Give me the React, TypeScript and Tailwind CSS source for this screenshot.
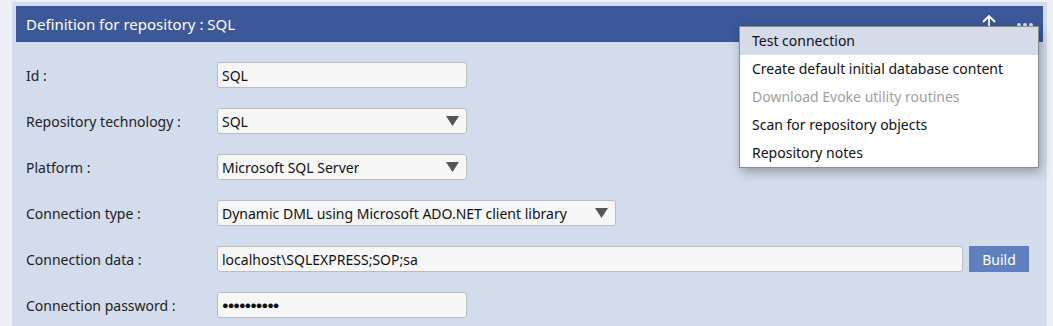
import React from "react";

const font = { fontFamily: '"Noto Sans", "Open Sans", sans-serif' };

function Arrow() {
  return (
    <svg width="13" height="10" viewBox="0 0 13 10" className="shrink-0">
      <polygon points="0,0 13,0 6.5,10" fill="#555555" />
    </svg>
  );
}

function Row({ label, children }: { label: string; children: React.ReactNode }) {
  return (
    <div className="flex items-center h-[26px]">
      <div className="w-[201px] pl-[10px] text-[14px] text-[#222]">{label}</div>
      <div className="flex items-center gap-[6px]">{children}</div>
    </div>
  );
}

function Box({ w, value, select }: { w: string; value: string; select?: boolean }) {
  return (
    <div
      className={`${w} h-[26px] bg-[#f7f7f7] border border-[#bcbcbc] rounded-[3px] flex items-center justify-between pl-[4px] pr-[7px] text-[14px] text-[#111]`}
    >
      <span className="truncate">{value}</span>
      {select && <Arrow />}
    </div>
  );
}

export default function App() {
  return (
    <div className="relative w-[1053px] h-[326px] bg-[#eff0f6] pl-3 pr-[6px] pt-[2px] overflow-hidden" style={font}>
      <div className="bg-[#d3dcec] h-full pl-1 pr-1 pt-1">
        <div className="h-[36px] bg-[#3c5898] flex items-center justify-between pl-[10px] pr-[10px] text-white">
          <span className="text-[15px]">Definition for repository : SQL</span>
          <div className="flex items-start self-stretch gap-[21px]">
            <svg width="14" height="22" viewBox="0 0 14 22" fill="none" stroke="white" strokeWidth="1.8" className="mt-[8px]">
              <path d="M7 22 V2 M1 8 L7 2 L13 8" />
            </svg>
            <div className="flex gap-[2px] mt-[17px]">
              <span className="w-[4px] h-[4px] bg-white/80 rounded-full" />
              <span className="w-[4px] h-[4px] bg-white/80 rounded-full" />
              <span className="w-[4px] h-[4px] bg-white/80 rounded-full" />
            </div>
          </div>
        </div>
        <div className="flex flex-col gap-[20px] pt-[20px]">
          <Row label="Id :">
            <Box w="w-[250px]" value="SQL" />
          </Row>
          <Row label="Repository technology :">
            <Box w="w-[250px]" value="SQL" select />
          </Row>
          <Row label="Platform :">
            <Box w="w-[250px]" value="Microsoft SQL Server" select />
          </Row>
          <Row label="Connection type :">
            <Box w="w-[399px]" value="Dynamic DML using Microsoft ADO.NET client library" select />
          </Row>
          <Row label="Connection data :">
            <Box w="w-[746px]" value="localhost\SQLEXPRESS;SOP;sa" />
            <button className="w-[60px] h-[26px] bg-[#5f7fbf] text-white text-[14px]">Build</button>
          </Row>
          <Row label="Connection password :">
            <div className="w-[250px] h-[26px] bg-[#f7f7f7] border border-[#bcbcbc] rounded-[3px] flex items-center pl-[4px] text-[11px] tracking-[-1px] text-[#111]">
              ●●●●●●●●●●
            </div>
          </Row>
        </div>
      </div>
      <div className="absolute left-[739px] top-[26px] w-[300px] bg-white border border-[#8c8c8c] shadow-[2px_4px_10px_rgba(0,0,0,0.3)] text-[14px] text-[#111]">
        <div className="h-[28px] flex items-center pl-[12px] pb-[1px] bg-[#d5dbe9]">Test connection</div>
        <div className="h-[28px] flex items-center pl-[12px] pb-[1px]">Create default initial database content</div>
        <div className="h-[28px] flex items-center pl-[12px] pb-[1px] text-[#a0a0a0]">Download Evoke utility routines</div>
        <div className="h-[28px] flex items-center pl-[12px] pb-[1px]">Scan for repository objects</div>
        <div className="h-[28px] flex items-center pl-[12px] pb-[1px]">Repository notes</div>
      </div>
    </div>
  );
}
